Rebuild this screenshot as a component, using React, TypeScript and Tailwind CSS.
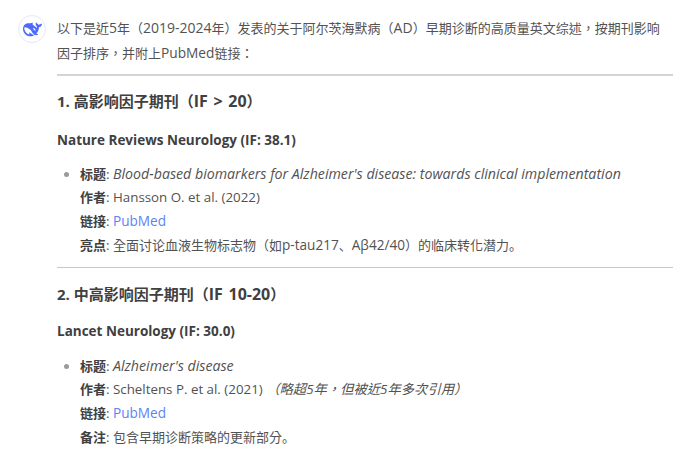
import type { ReactNode } from "react";

const body = { fontFamily: '"Open Sans", "Noto Sans CJK TC", sans-serif' };

function Sc({ children }: { children: string }) {
  return <span className="font-['Noto_Sans_CJK_SC']">{children}</span>;
}

function L({ children }: { children: ReactNode }) {
  return <span className="text-[14px]">{children}</span>;
}

function H({ children }: { children: ReactNode }) {
  return <span className="text-[16px] [word-spacing:1.5px]">{children}</span>;
}

function Logo() {
  return (
    <div className="w-[28px] h-[28px] shrink-0 rounded-full border border-[#e4e9fb] bg-white flex items-center justify-center">
      <svg width="19" height="19" viewBox="0 0 24 24">
        <path
          fill="#4d6bfe"
          d="M23.748 4.482c-.254-.124-.364.113-.512.234-.051.039-.094.09-.137.136-.372.397-.806.657-1.373.626-.829-.046-1.537.214-2.163.848-.133-.782-.575-1.248-1.247-1.548-.352-.156-.708-.311-.955-.65-.172-.241-.219-.51-.305-.774-.055-.16-.11-.323-.293-.35-.2-.031-.278.136-.356.276-.313.572-.434 1.202-.422 1.84.027 1.436.633 2.58 1.838 3.393.137.093.172.187.129.323-.082.28-.18.552-.266.833-.055.179-.137.217-.329.14a5.526 5.526 0 01-1.736-1.18c-.857-.828-1.631-1.742-2.597-2.458a11.365 11.365 0 00-.689-.471c-.985-.957.13-1.743.388-1.836.27-.098.093-.432-.779-.428-.872.004-1.67.295-2.687.684a3.055 3.055 0 01-.465.137 9.597 9.597 0 00-2.883-.102c-1.885.21-3.39 1.102-4.497 2.623C.082 8.606-.231 10.684.152 12.85c.403 2.284 1.569 4.175 3.36 5.653 1.858 1.533 3.997 2.284 6.438 2.14 1.482-.085 3.133-.284 4.994-1.86.47.234.962.327 1.78.397.63.059 1.236-.03 1.705-.128.735-.156.684-.837.419-.961-2.155-1.004-1.682-.595-2.113-.926 1.096-1.296 2.746-2.642 3.392-7.003.05-.347.007-.565 0-.845-.004-.17.035-.237.23-.256a4.173 4.173 0 001.545-.475c1.396-.763 1.96-2.015 2.093-3.517.02-.23-.004-.467-.247-.588zM11.581 18c-2.089-1.642-3.102-2.183-3.52-2.16-.392.024-.321.471-.235.763.09.288.207.486.371.739.114.167.192.416-.113.603-.673.416-1.842-.14-1.897-.167-1.361-.802-2.5-1.86-3.301-3.307-.774-1.393-1.224-2.887-1.298-4.482-.02-.386.093-.522.477-.592a4.696 4.696 0 011.529-.039c2.132.312 3.946 1.265 5.468 2.774.868.86 1.525 1.887 2.202 2.891.72 1.066 1.494 2.082 2.48 2.914.348.292.625.514.891.677-.802.09-2.14.11-3.054-.614zm1-6.44a.306.306 0 01.415-.287.302.302 0 01.2.288.306.306 0 01-.31.307.303.303 0 01-.304-.308zm3.11 1.596c-.2.081-.399.151-.59.16a1.245 1.245 0 01-.798-.254c-.274-.23-.47-.358-.552-.758a1.73 1.73 0 01.016-.588c.07-.327-.008-.537-.239-.727-.187-.156-.426-.199-.688-.199a.559.559 0 01-.254-.078c-.11-.054-.2-.19-.114-.358.028-.054.16-.186.192-.21.356-.202.767-.136 1.146.016.352.144.618.408 1.001.782.391.451.462.576.685.914.176.265.336.537.445.848.067.195-.019.354-.25.452z"
        />
      </svg>
    </div>
  );
}

function Item({ rows, top }: { rows: { label: string; value: ReactNode }[]; top: string }) {
  return (
    <ul className={`${top} pl-[23px] list-disc marker:text-[#9a9a9a]`}>
      <li>
        {rows.map((r) => (
          <div key={r.label} className="h-[23.6px]">
            <strong className="font-bold text-[#404040]">{r.label}</strong>
            <span className="text-[13.33px]">: </span>
            {r.value}
          </div>
        ))}
      </li>
    </ul>
  );
}

const Link = () => <a className="text-[13.6px] text-[#5b83f5]">PubMed</a>;

export default function App() {
  return (
    <div
      className="w-[700px] h-[460px] overflow-hidden bg-white flex gap-[11px] pl-[18px] pr-[27px] pt-[15px] text-[13px] leading-[23.6px] text-[#525252]"
      style={body}
    >
      <Logo />
      <div className="flex-1 min-w-0 pt-[1px]">
        <p>
          以下是近<L>5</L>年（<L>2019-2024</L>年）发表的关于阿尔茨海默病（<L>AD</L>）早期诊断的高质量英文综述，按期刊影响
          <br />
          因子排序，并附上<span className="text-[13.7px]">PubMed</span>链接：
        </p>
        <hr className="mt-[9px] border-0 h-[2px] bg-[#d4d4d4]" />
        <h3 className="mt-[13px] text-[15px] leading-[24px] font-bold text-[#404040]">
          1. 高影响因子期刊（<H>IF &gt; 20</H>）
        </h3>
        <p className="mt-[16px] text-[13.5px] font-bold text-[#404040]">Nature Reviews Neurology (IF: 38.1)</p>
        <Item
          top="mt-[9.4px]"
          rows={[
            { label: "标题", value: <em className="text-[14.2px]">Blood-based biomarkers for Alzheimer's disease: towards clinical implementation</em> },
            { label: "作者", value: <span className="text-[13.33px]">Hansson O. et al. (2022)</span> },
            { label: "链接", value: <Link /> },
            { label: "亮点", value: <>全面讨论血液生物标志物（如<span className="text-[13.6px]">p-tau217</span><Sc>、</Sc><span className="text-[13.6px]">Aβ42/40</span>）的临床转化潜力<Sc>。</Sc></> },
          ]}
        />
        <hr className="mt-[10.6px] border-0 h-[1px] bg-[#c8c8c8]" />
        <h3 className="mt-[14px] text-[15px] leading-[24px] font-bold text-[#404040]">
          2. 中高影响因子期刊（<H>IF 10-20</H>）
        </h3>
        <p className="mt-[14px] text-[13.5px] font-bold text-[#404040]">Lancet Neurology (IF: 30.0)</p>
        <Item
          top="mt-[10.4px]"
          rows={[
            { label: "标题", value: <em className="text-[14.2px]">Alzheimer's disease</em> },
            { label: "作者", value: <span className="text-[13.33px]">Scheltens P. et al. (2021) <em>（略超5年，但被近5年多次引用）</em></span> },
            { label: "链接", value: <Link /> },
            { label: "备注", value: <>包含早期诊断策略的更新部分<Sc>。</Sc></> },
          ]}
        />
      </div>
    </div>
  );
}
